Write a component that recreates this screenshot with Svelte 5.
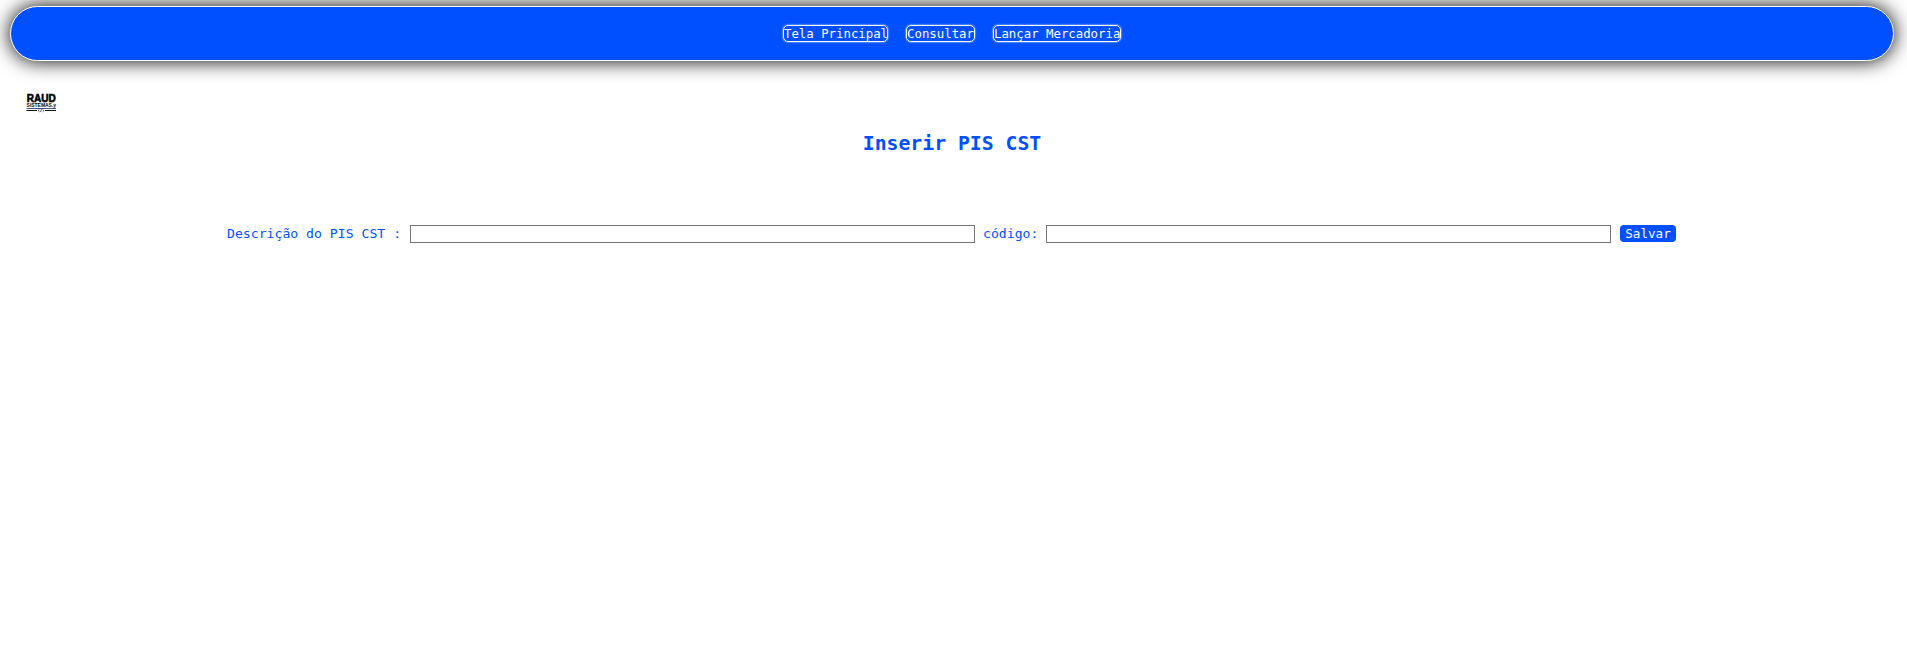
<script>
  const links = [
    { text: 'Tela Principal', width: 105 },
    { text: 'Consultar', width: 69 },
    { text: 'Lançar Mercadoria', width: 128 }
  ];
</script>

<header>
  <nav>
    {#each links as link}
      <a href="#top" style="width: {link.width}px">{link.text}</a>
    {/each}
  </nav>
</header>

<svg class="logo" width="36" height="28" viewBox="-2 -4 36 28" role="img" aria-label="Raud Sistemas">
  <text x="0.8" y="8.6" textLength="29" lengthAdjust="spacingAndGlyphs" font-size="11" font-weight="700" stroke="#000" stroke-width="0.6">RAUD</text>
  <text x="0.6" y="14" textLength="29.4" lengthAdjust="spacingAndGlyphs" font-size="6" font-weight="700">SISTEMAS.y</text>
  <path d="M0.5 15.5H30" stroke="#41558c" />
  <path d="M0.5 17.5H11M19 17.5H30" stroke="#111" />
  <path d="M13.5 16.3L12 17.5l1.5 1.3M16.5 16.3L18 17.5l-1.5 1.3M15.5 16l-1 3" fill="none" stroke="#222" stroke-width="0.7" />
</svg>

<h1>Inserir PIS CST</h1>

<form onsubmit={(e) => e.preventDefault()}>
  <label for="descricao">Descrição do PIS CST :</label>
  <input id="descricao" type="text" />
  <label class="code" for="codigo">código:</label>
  <input id="codigo" type="text" />
  <button>Salvar</button>
</form>

<style>
  :global(body) {
    background: #fff;
    font-family: Consolas, "DejaVu Sans Mono", monospace;
  }
  header {
    box-sizing: border-box;
    height: 55px;
    margin: 6px 13px 0 10px;
    border: 1px solid #fff;
    border-radius: 28px;
    background: #0050ff;
    box-shadow: 0 0 20px #000;
  }
  nav {
    display: flex;
    justify-content: center;
    gap: 18px;
    padding-top: 18px;
  }
  a {
    box-sizing: border-box;
    height: 17px;
    border: 1px solid #fff;
    border-radius: 5px;
    box-shadow: 0 0 2px #fff;
    color: #fff;
    font-size: 12.35px;
    line-height: 17px;
    text-align: center;
    text-decoration: none;
    white-space: nowrap;
  }
  .logo {
    display: block;
    margin: 28px 0 0 24px;
    overflow: visible;
    font-family: "Liberation Sans", sans-serif;
  }
  h1 {
    margin: 14px 0 0;
    padding-right: 3px;
    color: #0050ff;
    font-size: 19.75px;
    line-height: 26px;
    text-align: center;
  }
  form {
    display: flex;
    align-items: center;
    margin: 68px 0 0 227px;
    height: 18px;
    color: #0050ff;
    font-size: 13.15px;
    line-height: 18px;
    white-space: nowrap;
  }
  label {
    flex: none;
    width: 183px;
  }
  .code {
    box-sizing: border-box;
    width: 71px;
    padding-left: 8px;
  }
  input {
    box-sizing: border-box;
    flex: none;
    width: 565px;
    height: 18px;
    margin: 0;
    padding: 1px 2px;
    border: 1px solid #767676;
    border-radius: 0;
    background: #fff;
  }
  button {
    width: 56px;
    height: 17px;
    margin: 0 0 1px 9px;
    padding: 0;
    border: 0;
    border-radius: 4px;
    background: #0050ff;
    color: #fff;
    font-family: inherit;
    font-size: 12.6px;
    line-height: 17px;
  }
</style>
